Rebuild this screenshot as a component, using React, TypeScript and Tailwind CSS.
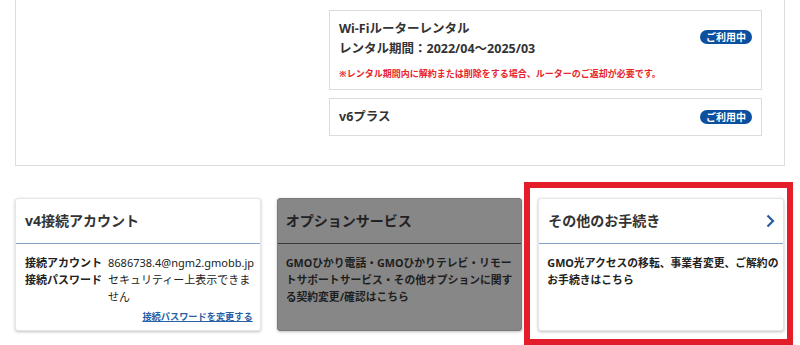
import React from "react";

function Badge() {
  return (
    <span className="inline-flex h-[14px] w-[52px] items-center justify-center rounded-full bg-[#0b4f9e] text-[10px] font-bold leading-none text-white">
      ご利用中
    </span>
  );
}

export default function App() {
  return (
    <div className="relative h-[345px] w-[800px] overflow-hidden bg-white font-['Noto_Sans','Noto_Sans_CJK_JP',sans-serif] text-[#333]">
      {/* top panel */}
      <div className="mx-[15px] w-[770px] border-x border-b border-[#dedede] pb-[29px] pt-[10px]">
        <div className="ml-auto mr-[22px] flex w-[433px] flex-col gap-[8px]">
          <div className="border border-[#dcdcdc] px-[9px] pb-[8px] pt-[8px]">
            <div className="flex items-start justify-between">
              <div className="text-[12.5px] font-bold leading-[20px] text-[#333]">
                <div>Wi-Fiルーターレンタル</div>
                <div>レンタル期間：2022/04～2025/03</div>
              </div>
              <div className="mt-[4px]">
                <Badge />
              </div>
            </div>
            <div className="mt-[8px] text-[9px] font-bold leading-[14px] text-[#e8232a]">
              ※レンタル期間内に解約または削除をする場合、ルーターのご返却が必要です。
            </div>
          </div>
          <div className="flex items-center justify-between border border-[#dcdcdc] px-[9px] py-[8px]">
            <div className="text-[12.5px] font-bold leading-[20px] text-[#333]">v6プラス</div>
            <Badge />
          </div>
        </div>
      </div>

      {/* bottom cards */}
      <div className="mx-[15px] mt-[32px] grid w-[769px] grid-cols-3 gap-[16px]">
        {/* card 1 */}
        <div className="h-[133px] rounded-[3px] border border-[#e6e6e6] bg-white shadow-[0_1px_3px_rgba(0,0,0,0.25)]">
          <div className="h-[45px] border-b border-[#86a3c3] px-[9px] pt-[12px] text-[14px] font-bold leading-[20px] text-[#333]">
            v4接続アカウント
          </div>
          <div className="pl-[9px] pr-[7px] pt-[10px] text-[11px] font-bold leading-[17px] text-[#222]">
            <div className="flex">
              <div className="w-[83px] shrink-0">接続アカウント</div>
              <div className="font-normal">8686738.4@ngm2.gmobb.jp</div>
            </div>
            <div className="flex">
              <div className="w-[83px] shrink-0">接続パスワード</div>
              <div className="font-normal">セキュリティー上表示できません</div>
            </div>
            <div className="mt-[3px] text-right text-[9.2px] leading-[17px] text-[#2a5fa5] underline">
              接続パスワードを変更する
            </div>
          </div>
        </div>

        {/* card 2 */}
        <div className="h-[133px] rounded-[3px] border border-[#7a7a7a] bg-[#878787] shadow-[0_1px_3px_rgba(0,0,0,0.25)]">
          <div className="h-[45px] border-b border-[#3a3a3a] px-[8px] pt-[12px] text-[14px] font-bold leading-[20px] text-[#222]">
            オプションサービス
          </div>
          <div className="pl-[8px] pr-[7px] pt-[10px] text-[10.8px] font-bold leading-[17px] text-[#1e1e1e]">
            GMOひかり電話・GMOひかりテレビ・リモートサポートサービス・その他オプションに関する契約変更/確認はこちら
          </div>
        </div>

        {/* card 3 */}
        <div className="relative">
          <div className="h-[133px] rounded-[3px] border border-[#e6e6e6] bg-white shadow-[0_1px_3px_rgba(0,0,0,0.25)]">
            <div className="flex h-[45px] items-start justify-between border-b border-[#86a3c3] pl-[9px] pr-[8px] pt-[12px]">
              <div className="text-[14px] font-bold leading-[20px] text-[#333]">その他のお手続き</div>
              <svg width="10" height="14" viewBox="0 0 10 14" className="mt-[3px]">
                <path d="M2.5 1.5 L8 7 L2.5 12.5" fill="none" stroke="#2b5c9a" strokeWidth="2.2" />
              </svg>
            </div>
            <div className="pl-[8px] pr-0 pt-[10px] text-[10.8px] font-bold leading-[17px] text-[#222]">
              GMO光アクセスの移転、事業者変更、ご解約のお手続きはこちら
            </div>
          </div>
          <div className="pointer-events-none absolute bottom-[-14px] left-[-14px] right-[-9px] top-[-16px] border-[6px] border-[#e31e2a]" />
        </div>
      </div>
    </div>
  );
}
